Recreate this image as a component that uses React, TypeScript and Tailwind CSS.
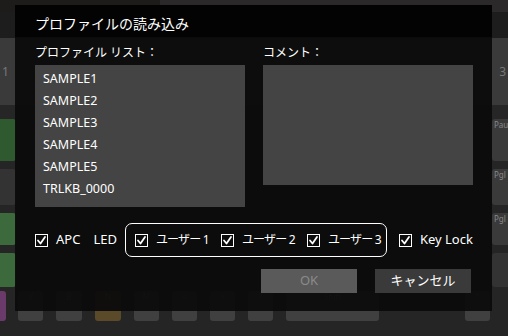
import React from 'react';

const font = { fontFamily: '"Noto Sans", "Noto Sans CJK JP", sans-serif' };

const Check: React.FC = () => (
  <span className="w-[13px] h-[13px] border border-white flex items-center justify-center shrink-0">
    <svg width="11" height="11" viewBox="0 0 11 11" fill="none" stroke="white" strokeWidth="1.8" strokeLinecap="round" strokeLinejoin="round">
      <polyline points="2 5.5 4.5 8.5 9 2" />
    </svg>
  </span>
);

// dimmed keyboard rows behind the dialog
const keyRows = [
  { h: 'h-[42px]', left: 'bg-[#2f5a2f]', right: 'bg-[#3a3a3a]', rl: 'Pau' },
  { h: 'h-[36px]', left: 'bg-[#333]', right: 'bg-[#3a3a3a]', rl: 'Pgl' },
  { h: 'h-[32px]', left: 'bg-[#3d6a3d]', right: 'bg-[#3a3a3a]', rl: 'Pgl' },
  { h: 'h-[34px]', left: 'bg-[#3d6a3d]', right: 'bg-[#333]', rl: '' },
];

const bottomKeys = [
  { w: 'w-[25px]', c: 'bg-[#404040]', l: 'V' },
  { w: 'w-[26px]', c: 'bg-[#404040]', l: 'B' },
  { w: 'w-[26px]', c: 'bg-[#5a4a2a]', l: 'N' },
  { w: 'w-[25px]', c: 'bg-[#404040]', l: 'M' },
  { w: 'w-[25px]', c: 'bg-[#404040]', l: '<' },
  { w: 'w-[25px]', c: 'bg-[#404040]', l: '>' },
  { w: 'w-[25px]', c: 'bg-[#404040]', l: '?' },
  { w: 'w-[93px]', c: 'bg-[#404040]', l: 'Shift' },
];

const App: React.FC = () => {
  const profiles = ['SAMPLE1', 'SAMPLE2', 'SAMPLE3', 'SAMPLE4', 'SAMPLE5', 'TRLKB_0000'];
  const users = ['ユーザー 1', 'ユーザー 2', 'ユーザー 3'];

  return (
    <div className="relative w-[508px] h-[336px] overflow-hidden bg-[#202020]" style={font}>
      {/* Background keyboard (dimmed) */}
      <div className="flex flex-col w-full h-full">
        <div className="flex h-[12px]">
          <div className="w-[160px] bg-[#1e1b1b]" />
          <div className="flex-1 bg-[#2b2929]" />
        </div>
        <div className="h-[26px] bg-[#1d1d1d]" />
        <div className="h-[67px] bg-[#3a3a3a] flex items-center justify-between px-[2px] text-[#777] text-[12px]">
          <span>1</span>
          <span>3</span>
        </div>
        <div className="h-[14px] bg-[#262626]" />
        <div className="flex flex-col gap-[8px] bg-[#252525]">
          {keyRows.map((r, i) => (
            <div key={i} className={`flex justify-between ${r.h}`}>
              <div className={`w-[20px] ml-[-4px] rounded-[3px] ${r.left}`} />
              <div className={`w-[28px] mr-[-12px] rounded-[3px] ${r.right} text-[8px] text-[#888] px-[2px]`}>{r.rl}</div>
            </div>
          ))}
        </div>
        <div className="flex-1 flex items-start gap-[13px] pt-[4px] bg-[#252525]">
          <div className="w-[6px] h-[30px] bg-[#6a3a6a] rounded-r-[3px]" />
          <div className="flex gap-[13px] ml-[-1px]">
            {bottomKeys.map((k, i) => (
              <div key={i} className={`${k.w} h-[30px] rounded-[3px] ${k.c} flex justify-center text-[8px] text-[#777]`}>{k.l}</div>
            ))}
          </div>
          <div className="w-[60px]" />
          <div className="w-[25px] h-[30px] rounded-[3px] bg-[#404040] flex justify-center text-[8px] text-[#777]">↑</div>
        </div>
      </div>

      {/* Dialog overlay */}
      <div className="absolute left-[15px] top-[5px] w-[477px] h-[306px] flex flex-col">
        <div className="h-[32px] bg-[#030303] flex items-center pl-[20px] pt-[4px] text-[14px] text-white">
          プロファイルの読み込み
        </div>
        <div className="flex-1 bg-[#0b0b0b]/[0.94] pl-[20px] pt-[8px] text-white">
          <div className="flex gap-[18px]">
            <div className="flex flex-col">
              <div className="text-[12px] leading-[16px]">プロファイル リスト：</div>
              <div className="mt-[4px] w-[210px] h-[142px] bg-[#444444] pt-[3px] pl-[8px]">
                {profiles.map((p) => (
                  <div key={p} className="text-[12.5px] leading-[22px] text-white">{p}</div>
                ))}
              </div>
            </div>
            <div className="flex flex-col">
              <div className="text-[12px] leading-[16px]">コメント：</div>
              <div className="mt-[4px] w-[210px] h-[120px] bg-[#444444]" />
            </div>
          </div>

          <div className="flex items-center mt-[16px] h-[34px] text-[13px] whitespace-nowrap">
            <div className="flex items-center">
              <Check />
              <span className="ml-[8px]">APC</span>
            </div>
            <span className="ml-[13px]">LED</span>
            <div className="ml-[8px] h-[34px] w-[262px] border border-white rounded-[7px] flex items-center pl-[9px] gap-[15px]">
              {users.map((u) => (
                <div key={u} className="flex items-center">
                  <Check />
                  <span className="ml-[8px] w-[50px] text-[12px] tracking-[-0.8px]">{u}</span>
                </div>
              ))}
            </div>
            <div className="flex items-center ml-[12px]">
              <Check />
              <span className="ml-[8px]">Key Lock</span>
            </div>
          </div>

          <div className="flex gap-[18px] mt-[12px] ml-[226px]">
            <button className="w-[96px] h-[24px] bg-[#5a5a5a] text-[#8a8a8a] text-[13px]">OK</button>
            <button className="w-[96px] h-[24px] bg-[#3a3a3a] text-white text-[13px]">キャンセル</button>
          </div>
        </div>
      </div>
    </div>
  );
};

export default App;
